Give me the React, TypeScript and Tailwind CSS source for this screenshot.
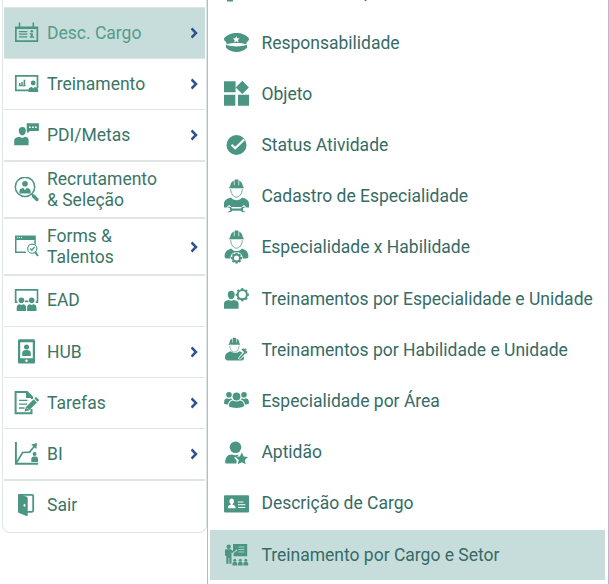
import type { ReactNode } from "react";
import clsx from "clsx";

interface MenuItem {
  label: ReactNode;
  icon: ReactNode;
  height: string;
  border: string;
  arrow?: boolean;
  active?: boolean;
}

interface SubItem {
  label: string;
  icon: ReactNode;
  active?: boolean;
}

const line = { fill: "none", stroke: "currentColor" };

/* Shared icon parts */

function Helmet() {
  return (
    <>
      <path d="M5.200 9.200c-.3-1 .3-1.600 1-1.800.1-3 1.500-5 3.600-6v4.800h.7V.9c.2-.6 3.800-.6 4 0v5.300h.7V1.400c2.100 1 3.500 3 3.600 6 .7.2 1.300.8 1 1.800z" />
      <path d="M6.700 10.200c.2 4.800 3 8 5.800 8s5.600-3.200 5.800-8" {...line} strokeWidth=".8" />
    </>
  );
}

function Gear({ x, y, r }: { x: number; y: number; r: number }) {
  return (
    <g transform={`translate(${x} ${y})`}>
      <circle r={r} {...line} strokeWidth="2" />
      {[0, 45, 90, 135, 180, 225, 270, 315].map((a) => (
        <rect key={a} x="-1.100" y={-r - 2} width="2.200" height="1.700" transform={`rotate(${a})`} />
      ))}
    </g>
  );
}

/* Main menu icons, 26x26 */

const icons = {
  cargo: (
    <>
      <path d="M5.500 2.500v5M19.300 2.500v5" {...line} strokeWidth="1.600" />
      <path d="M1 6.500h23.200V22H1zM2.700 9v11.300h19.800V9z" fillRule="evenodd" />
      <path d="M5 11.600h8.300M5 14.200h8.300M5 16.800h8.300" {...line} strokeWidth="1.200" />
      <circle cx="17.800" cy="11.300" r="1.300" />
      <path d="M15.800 13.200h3v3.300h1.300v1.300h-4.300v-1.300h1v-2h-1z" />
    </>
  ),
  treinamento: (
    <>
      <path d="M15 19.300H1.800V4.800h21.700V17" {...line} strokeWidth="1.700" />
      <path d="M5 12h1.500v2.500H5zM7.300 11h1.500v3.500H7.300zM9.600 8.800h1.600v5.700H9.600zM4.800 14.300h7v1h-7z" />
      <circle cx="19.200" cy="12" r="2.400" />
      <path d="M14.500 20.900v-2.200c0-1.900 1.700-2.500 3.400-2.700l1.400 1.600 1.400-1.600c1.700.2 3.500.8 3.500 2.700v2.200z" />
    </>
  ),
  metas: (
    <>
      <path d="M4.800 8.500c0-2.300 1.500-3.400 3.500-3.400s3.500 1.100 3.500 3.400c0 2.900-1.500 4.900-3.500 4.900s-3.500-2-3.500-4.900z" />
      <path d="M.2 23.200v-4.600c0-2.500 2.600-3.300 5.100-3.800l3 1.300 3-1.300c2.500.5 3.300 1.500 3.300 3.800v4.600z" />
      <path d="M12.700 1.300h12.200v7.800H16l-2.800 2.500V9.100h-.5z" />
      <path d="M15 5.200h1.700M18 5.200h1.700M21 5.200h1.700" stroke="#fff" strokeWidth="1.500" />
    </>
  ),
  recrutamento: (
    <>
      <circle cx="11" cy="9.900" r="9.700" {...line} strokeWidth="1.500" />
      <circle cx="11" cy="6.700" r="2.800" />
      <path d="M5.400 16.500v-2.300c0-2.500 2-3 4-3.200l1.600 2.200 1.600-2.200c2 .2 4 .7 4 3.200v2.300z" />
      <path d="m17.500 17 2 2" {...line} strokeWidth="1.500" />
      <path d="m19.500 19 3.500 3.500" {...line} strokeWidth="3.200" strokeLinecap="round" />
    </>
  ),
  forms: (
    <>
      <path d="M1 1.500h20.800v9h-1.500V6H2.500v11.500H12V19H1z" />
      <path d="M3 3.600h1M5 3.600h1M7 3.600h1" stroke="#fff" strokeWidth="1" />
      <circle cx="18.300" cy="14.700" r="4.600" {...line} strokeWidth="1.100" />
      <path d="m16.200 14.500 1.600 1.700 2.800-3.200" {...line} strokeWidth="1.300" />
      <path d="m21.300 18.300 2.300 3" {...line} strokeWidth="1.900" strokeLinecap="round" />
    </>
  ),
  ead: (
    <>
      <path d="M.8.900h23.500v14h-2.600v-1.600h1V2.700H2.500v10.600h1v1.600H.8zM10.800 12.600h3.600v1.700h-3.600z" />
      <circle cx="7.400" cy="12.300" r="2.800" />
      <circle cx="17.700" cy="12.300" r="2.800" />
      <path d="M2.700 22.900v-3.100c0-2.700 1.600-3.500 3-3.500l1.700.8 1.700-.8c1.400 0 3 .8 3 3.500v3.100zM13.100 22.900v-3.100c0-2.700 1.500-3.500 2.900-3.500l1.700.8 1.700-.8c1.400 0 3.100.8 3.100 3.500v3.100z" />
    </>
  ),
  hub: (
    <>
      <path
        d="M5.500.3h14c1 0 1.500.6 1.500 1.500v21.300c0 1-.5 1.500-1.500 1.500h-14c-1 0-1.500-.5-1.500-1.500V1.800C4 .9 4.500.3 5.500.3zM6.200 3.200v16h12.600v-16z"
        fillRule="evenodd"
      />
      <circle cx="12.500" cy="7.900" r="2.500" />
      <path d="M8.200 17v-2.700c0-2.300 1.300-3.200 4.300-3.200s4.300.9 4.300 3.200V17z" />
      <circle cx="12.500" cy="21.800" r="1.200" fill="#fff" />
    </>
  ),
  tarefas: (
    <>
      <path d="M18 9V7l-5-5H1.600v21.200H17.500V19" {...line} strokeWidth="2" />
      <path d="M12 2v6h6.500z" />
      <path d="M5 10.400h8.500M5 14.200h8M5 18h5.500" {...line} strokeWidth="1.300" />
      <path d="m10.500 21.500 1.200-4.300 8-8 3.200 3.200-8 8zM20.400 8.500l1.500-1.600 3.300 3.200-1.600 1.600z" />
      <path d="m12.600 17.800 1.600 1.700" stroke="#fff" strokeWidth=".7" />
    </>
  ),
  bi: (
    <>
      <path d="M1.900 1v21.800H24" {...line} strokeWidth="1.900" />
      <path d="m2.600 21.500 6-10 7-.4 5.600-6.800" {...line} strokeWidth="1.700" />
      <path d="m17.200 3.600 5.900-1.600-.8 6z" />
      <circle cx="20.600" cy="13" r="2" />
      <path d="M17.300 21v-3c0-1.800 1.400-2.400 3.300-2.400s3.400.6 3.400 2.400v3z" />
    </>
  ),
  sair: (
    <>
      <path d="M5.500 1.800H18c.8 0 1.200.5 1.200 1.200v14.600c0 .7-.4 1.200-1.200 1.200h-5" {...line} strokeWidth="1.800" />
      <path d="M4 2.200C4 1.300 5 .9 6 1.200l6.700 2.500c.7.300 1 .8 1 1.500V22c0 .7-.6 1.200-1.300.9l-7.300-2.800C4.300 19.800 4 19.300 4 18.500z" />
      <ellipse cx="10.500" cy="12.300" rx=".9" ry="1.500" fill="#fff" />
    </>
  ),
};

/* Submenu icons, 25x36 */

const subIcons = {
  atividade: <path d="M3 20h6v7.500H3z" />,
  responsabilidade: (
    <>
      <path d="M0 13.500C2 10 8 8 12.500 8S23 10 25 13.500c.3 2-1.500 3.300-2.500 4v1.800c-6-1.900-14-1.900-20 0v-1.800c-1-.7-2.800-2-2.500-4z" />
      <path d="M2 19.800c6 2.200 15 2.200 21 0v3C20 26 16 27.100 12.500 27.100S5 26 2 22.800z" />
      <path d="m12.300 11 1 2.300 2.500.2-1.900 1.600.6 2.500-2.200-1.400-2.200 1.400.6-2.500-1.900-1.600 2.500-.2z" fill="#fff" />
    </>
  ),
  objeto: <path d="M0 5.200h11.600v11H0zM0 18.800h11.300v11H0zM14 18.800h11v11H14zM18.300 4.700l6.600 6.700-6.600 6.700-6.600-6.700z" />,
  status: (
    <>
      <circle cx="12.500" cy="17" r="10" />
      <path d="m7.500 16.700 3.700 3.600 9-8.800" fill="none" stroke="#fff" strokeWidth="2.200" />
    </>
  ),
  cadastro: (
    <>
      <Helmet />
      <path d="M0 28.500v-3.800c0-4 4-5.200 7-6.200 2.500 3.500 8.500 3.500 11 0 3 1 7 2.200 7 6.200v3.800h-2.500L20 26l-2.500 2h-10L5 26l-2.500 2.500z" />
      <path d="M6 30.600h13" {...line} strokeWidth="2.200" />
      <path d="M3.300 28.300c4-1.500 5 1 5 2.300s-1 3.800-5 2.300l2.500-.8.700-1.500-.7-1.500zM21.700 28.300c-4-1.500-5 1-5 2.300s1 3.800 5 2.300l-2.500-.8-.7-1.500.7-1.500z" />
    </>
  ),
  habilidade: (
    <>
      <Helmet />
      <path d="M.6 26.500c0-5.500 3.400-7 6.600-8.100 2.500 3.600 8.100 3.600 10.600 0 3.200 1.100 6.600 2.600 6.600 8.100 0 1-.8 2-2 2h-20c-1 0-1.800-1-1.800-2z" />
      <circle cx="12.500" cy="28.100" r="6.200" fill="#fff" />
      <Gear x={12.500} y={28.100} r={3.500} />
    </>
  ),
  treinamentoEspecialidade: (
    <>
      <path d="M3.800 13.500c0-2.500 1.300-3.700 3.400-3.700s3.500 1.200 3.500 3.700-1.400 4.800-3.500 4.800-3.400-2.300-3.400-4.800z" />
      <path d="M0 27.800v-5C0 20.500 1.500 19.300 4.700 19c1.500 1 3.600 1 5 0 3.200.3 4.900 1.500 4.900 3.800v5z" />
      <Gear x={18.300} y={13.700} r={4.600} />
    </>
  ),
  treinamentoHabilidade: (
    <>
      <g transform="translate(.4 5.500) scale(.8)">
        <Helmet />
      </g>
      <path d="M1 25.500c0-4 3-5.500 6-6.300 2 2.300 6.500 2.300 8.500 0l3 1.300-4 5c-.8 1.200 1 2.800 2.200 1.700l2.800-2.600c1.300 1.700.2 3.900-1.500 3.900H4c-1.800 0-3-1.300-3-3z" />
      <path d="m16 26 5-5.500" {...line} strokeWidth="1.700" strokeLinecap="round" />
      <path d="m17.300 17.500 2.200-1.200 4 3.800-1.400 1.900zM20.300 17.500l1-1.200 1.700 1.800z" />
    </>
  ),
  area: (
    <>
      <circle cx="12.500" cy="13.500" r="3.900" />
      <circle cx="5" cy="11.700" r="2.800" />
      <circle cx="20" cy="11.700" r="2.800" />
      <path d="M4.800 23.300c0-3.500 1.600-5.500 4.300-5.800 2 1.200 4.800 1.200 6.800 0 2.700.3 4.300 2.300 4.300 5.800-3.800 2.300-11.600 2.300-15.400 0z" />
      <path d="M0 20.500c0-3.500 1-5 3-5.200 1.400.8 2.800.8 4 0l1.200 1.200c-2.500 1-3.900 2.500-4.100 5-1.700 0-3-.4-4.100-1zM25 20.500c0-3.500-1-5-3-5.200-1.400.8-2.800.8-4 0l-1.200 1.200c2.500 1 3.900 2.500 4.100 5 1.700 0 3-.4 4.100-1z" />
    </>
  ),
  aptidao: (
    <>
      <circle cx="11.500" cy="12.300" r="5.800" />
      <path d="M1.200 27.500c0-5 2.300-8 6.300-8 2.500 1 5 1 7.300 0l-1.500 2.300-3.300.8 2.700 3-.3 2.900H2.500c-.8 0-1.300-.4-1.300-1z" />
      <path d="m17.800 17.500 1.900 3.900 4.300.6-3.200 3 .8 4.300-3.800-2.100-3.900 2.100.8-4.300-3.100-3 4.300-.6z" />
    </>
  ),
  descricao: (
    <>
      <rect y="9.200" width="25" height="17.400" rx="1" />
      <g fill="#fff">
        <ellipse cx="7.700" cy="15.300" rx="2.200" ry="2.700" />
        <path d="M3.800 22.300c0-2.300 1.200-3.300 3-3.600v-2h1.800v2c1.800.3 3 1.300 3 3.600z" />
      </g>
      <path d="M14 16h5.500M14 18.700h7.300M14 21.400h7.300" stroke="#fff" strokeWidth="1" />
    </>
  ),
  cargoSetor: (
    <>
      <path d="M9 7h14.200v12.200H9.500v-3l4-3-1-1.300L9 14z" />
      <path d="M14.500 10h5.800M14.500 12.500h5.800M14.500 15h5.800" stroke="#c7dddb" strokeWidth=".8" />
      <circle cx="4.700" cy="9.800" r="2.200" />
      <path d="M1 13.500c0-.8.500-1.200 1.300-1.200h4.500l1.700 1.500 3.500-2.200.8 1L8.500 16l-1-.5v11.300H5.300V21h-.8v5.800H2.300v-8H1z" />
      <circle cx="10.800" cy="23.200" r="1.500" />
      <circle cx="16.300" cy="23.200" r="1.500" />
      <circle cx="21.800" cy="23.200" r="1.500" />
      <path d="M8.400 28.600v-2.200c0-1.800 4.800-1.800 4.800 0v2.200zM13.900 28.600v-2.200c0-1.800 4.800-1.800 4.800 0v2.200zM19.400 28.600v-2.200c0-1.800 4.800-1.800 4.800 0v2.200z" />
    </>
  ),
};

const menu: MenuItem[] = [
  { label: "Desc. Cargo", icon: icons.cargo, height: "h-[51px]", border: "border-b", arrow: true, active: true },
  { label: "Treinamento", icon: icons.treinamento, height: "h-[51px]", border: "border-b", arrow: true },
  { label: "PDI/Metas", icon: icons.metas, height: "h-[52px]", border: "border-b-2", arrow: true },
  { label: <>Recrutamento<br />&amp; Seleção</>, icon: icons.recrutamento, height: "h-[57px]", border: "border-b-2" },
  { label: <>Forms &amp;<br />Talentos</>, icon: icons.forms, height: "h-[57px]", border: "border-b-2", arrow: true },
  { label: "EAD", icon: icons.ead, height: "h-[51px]", border: "border-b pb-px" },
  { label: "HUB", icon: icons.hub, height: "h-[51px]", border: "border-b", arrow: true },
  { label: "Tarefas", icon: icons.tarefas, height: "h-[51px]", border: "border-b", arrow: true },
  { label: "BI", icon: icons.bi, height: "h-[52px]", border: "border-b-2", arrow: true },
  { label: "Sair", icon: icons.sair, height: "h-[50px]", border: "border-b-0 pb-px" },
];

const submenu: SubItem[] = [
  { label: "Atividade Emp", icon: subIcons.atividade },
  { label: "Responsabilidade", icon: subIcons.responsabilidade },
  { label: "Objeto", icon: subIcons.objeto },
  { label: "Status Atividade", icon: subIcons.status },
  { label: "Cadastro de Especialidade", icon: subIcons.cadastro },
  { label: "Especialidade x Habilidade", icon: subIcons.habilidade },
  { label: "Treinamentos por Especialidade e Unidade", icon: subIcons.treinamentoEspecialidade },
  { label: "Treinamentos por Habilidade e Unidade", icon: subIcons.treinamentoHabilidade },
  { label: "Especialidade por Área", icon: subIcons.area },
  { label: "Aptidão", icon: subIcons.aptidao },
  { label: "Descrição de Cargo", icon: subIcons.descricao },
  { label: "Treinamento por Cargo e Setor", icon: subIcons.cargoSetor, active: true },
];

function MenuRow({ item }: { item: MenuItem }) {
  return (
    <li
      className={clsx(
        "flex shrink-0 items-center border-[#dfe5e4] pl-[10px] pr-[7px]",
        item.height,
        item.border,
        item.active ? "bg-[#c7dddb] text-[#529c88]" : "text-[#3b7566]"
      )}
    >
      <svg viewBox="0 0 26 26" className="size-[26px] shrink-0 fill-current text-[#4b9583]">
        {item.icon}
      </svg>
      <span className="ml-[7px] grow text-[17.5px] leading-[21px]">{item.label}</span>
      {item.arrow && (
        <svg viewBox="0 0 7 12" className="h-3 w-[7px] shrink-0">
          <path d="M.5 1.500 5 6 .5 10.500" fill="none" stroke="#30528c" strokeWidth="2.500" />
        </svg>
      )}
    </li>
  );
}

function SubmenuRow({ item }: { item: SubItem }) {
  return (
    <li
      className={clsx(
        "flex h-[50px] shrink-0 items-center pl-[14px] text-[#366b66]",
        item.active && "bg-[#c7dddb]"
      )}
    >
      <svg viewBox="0 0 25 36" className="h-9 w-[25px] shrink-0 fill-current text-[#4b9583]">
        {item.icon}
      </svg>
      <span className="ml-[12.4px] whitespace-nowrap text-[17.5px] leading-[21px]">{item.label}</span>
    </li>
  );
}

export default function App() {
  return (
    <div className="flex h-[584px] w-[609px] overflow-hidden bg-white font-[Roboto,sans-serif]">
      {/* Main menu */}
      <nav className="ml-[2px] h-[533px] w-[205px] shrink-0 overflow-hidden rounded-b-lg border-x border-b border-[#dfe5e4] px-px">
        <ul className="mt-[7px] flex flex-col border-t border-[#dfe5e4]">
          {menu.map((item, i) => (
            <MenuRow key={i} item={item} />
          ))}
        </ul>
      </nav>

      {/* Submenu, scrolled to its end */}
      <nav className="flex h-[584px] w-[402px] shrink-0 flex-col justify-end overflow-hidden border-x border-[#a3bfe8] pb-1 pl-[2px] pr-[3px]">
        <ul className="flex flex-col gap-[1.2px]">
          {submenu.map((item) => (
            <SubmenuRow key={item.label} item={item} />
          ))}
        </ul>
      </nav>
    </div>
  );
}
